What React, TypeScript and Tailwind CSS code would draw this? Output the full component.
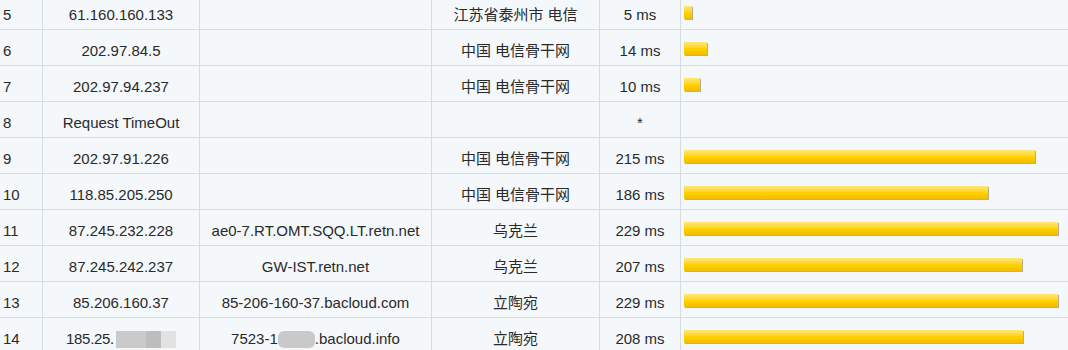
import React from "react";

interface Hop {
  no: number;
  ip: React.ReactNode;
  host: React.ReactNode;
  loc: string;
  ms: number | null;
}

const IpBlur = () => (
  <span className="ml-[2px] inline-flex h-[17px] align-middle">
    <span className="w-[30px] bg-[#cacaca]" />
    <span className="w-[15px] bg-[#bdbdbd]" />
    <span className="w-[15px] bg-[#e2e2e2]" />
  </span>
);

const HostBlur = () => (
  <span className="inline-block h-[17px] w-[37px] rounded-md bg-[#c9c9c9] align-middle" />
);

const hops: Hop[] = [
  { no: 5, ip: "61.160.160.133", host: "", loc: "江苏省泰州市 电信", ms: 5 },
  { no: 6, ip: "202.97.84.5", host: "", loc: "中国 电信骨干网", ms: 14 },
  { no: 7, ip: "202.97.94.237", host: "", loc: "中国 电信骨干网", ms: 10 },
  { no: 8, ip: "Request TimeOut", host: "", loc: "", ms: null },
  { no: 9, ip: "202.97.91.226", host: "", loc: "中国 电信骨干网", ms: 215 },
  { no: 10, ip: "118.85.205.250", host: "", loc: "中国 电信骨干网", ms: 186 },
  { no: 11, ip: "87.245.232.228", host: "ae0-7.RT.OMT.SQQ.LT.retn.net", loc: "乌克兰", ms: 229 },
  { no: 12, ip: "87.245.242.237", host: "GW-IST.retn.net", loc: "乌克兰", ms: 207 },
  { no: 13, ip: "85.206.160.37", host: "85-206-160-37.bacloud.com", loc: "立陶宛", ms: 229 },
  {
    no: 14,
    ip: (
      <span className="inline-flex items-center">
        <span className="tracking-[-0.3px]">185.25.</span>
        <IpBlur />
      </span>
    ),
    host: (
      <span className="inline-flex items-center">
        7523-1
        <HostBlur />
        .bacloud.info
      </span>
    ),
    loc: "立陶宛",
    ms: 208,
  },
];

// bar length per millisecond
const PX_PER_MS = 1.632;

export default function App() {
  return (
    <div
      className="h-[350px] w-[1068px] overflow-hidden bg-[#f4f8fa] text-[15px] text-[#2a2a2a]"
      style={{ fontFamily: '"Liberation Sans", "Noto Sans CJK SC", sans-serif' }}
    >
      <div className="-mt-[6px]">
        {hops.map((h) => (
          <div
            key={h.no}
            className="grid h-[36px] grid-cols-[43px_157px_232px_168px_81px_1fr] border-b border-[#d5dce8]"
          >
            <div className="flex items-center border-r border-[#d5dce8] pl-[3px] pt-[7px]">{h.no}</div>
            <div className="flex items-center justify-center border-r border-[#d5dce8] pt-[7px]">{h.ip}</div>
            <div className="flex items-center justify-center border-r border-[#d5dce8] pt-[7px]">{h.host}</div>
            <div className="flex items-center justify-center border-r border-[#d5dce8] pt-[7px]">{h.loc}</div>
            <div className="flex items-center justify-center border-r border-[#d5dce8] pt-[7px]">
              {h.ms === null ? "*" : `${h.ms} ms`}
            </div>
            <div className="flex items-center pl-[3px] pt-[2px]">
              {h.ms !== null && (
                <div
                  className="h-[13px] bg-gradient-to-b from-[#ffe873] via-[#ffd200] to-[#f2bd00] shadow-[1px_1px_0_#bcae8c]"
                  style={{ width: Math.round(h.ms * PX_PER_MS) }}
                />
              )}
            </div>
          </div>
        ))}
      </div>
    </div>
  );
}
